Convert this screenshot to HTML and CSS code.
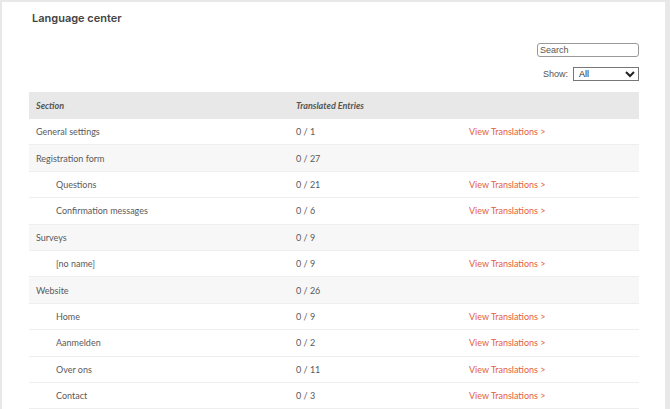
FILE: index.html
```html
<!DOCTYPE html>
<html lang="en">
<head>
    <meta charset="UTF-8">
    <title>Language center</title>
    <link rel="stylesheet" href="styles.css">
</head>
<body>
    <div class="panel">
        <h1>Language center</h1>

        <div class="filters">
            <input type="text" class="search" placeholder="Search">
            <label class="show">Show:
                <select>
                    <option>All</option>
                </select>
            </label>
        </div>

        <table class="entries">
            <thead>
                <tr>
                    <th class="col-section">Section</th>
                    <th class="col-count">Translated Entries</th>
                    <th></th>
                </tr>
            </thead>
            <tbody>
                <tr>
                    <td>General settings</td>
                    <td>0 / 1</td>
                    <td><a href="#">View Translations &gt;</a></td>
                </tr>
                <tr class="group">
                    <td>Registration form</td>
                    <td>0 / 27</td>
                    <td></td>
                </tr>
                <tr>
                    <td class="sub">Questions</td>
                    <td>0 / 21</td>
                    <td><a href="#">View Translations &gt;</a></td>
                </tr>
                <tr>
                    <td class="sub">Confirmation messages</td>
                    <td>0 / 6</td>
                    <td><a href="#">View Translations &gt;</a></td>
                </tr>
                <tr class="group">
                    <td>Surveys</td>
                    <td>0 / 9</td>
                    <td></td>
                </tr>
                <tr>
                    <td class="sub">[no name]</td>
                    <td>0 / 9</td>
                    <td><a href="#">View Translations &gt;</a></td>
                </tr>
                <tr class="group">
                    <td>Website</td>
                    <td>0 / 26</td>
                    <td></td>
                </tr>
                <tr>
                    <td class="sub">Home</td>
                    <td>0 / 9</td>
                    <td><a href="#">View Translations &gt;</a></td>
                </tr>
                <tr>
                    <td class="sub">Aanmelden</td>
                    <td>0 / 2</td>
                    <td><a href="#">View Translations &gt;</a></td>
                </tr>
                <tr>
                    <td class="sub">Over ons</td>
                    <td>0 / 11</td>
                    <td><a href="#">View Translations &gt;</a></td>
                </tr>
                <tr>
                    <td class="sub">Contact</td>
                    <td>0 / 3</td>
                    <td><a href="#">View Translations &gt;</a></td>
                </tr>
            </tbody>
        </table>
    </div>
</body>
</html>
```

FILE: styles.css
```css
body {
    margin: 0;
    background-color: #e8e8e8;
    font-family: 'Lato', 'Noto Sans', sans-serif;
    color: #555;
    height: 100vh;
    overflow: hidden;
}

.panel {
    background-color: #fff;
    margin: 2px 5px 0 2px;
    padding: 8px 26px 0 27px;
    height: 100%;
    box-sizing: border-box;
}

h1 {
    margin: 0 0 0 3px;
    font-family: 'Inter', sans-serif;
    font-size: 11px;
    font-weight: 600;
    color: #444;
    line-height: 16px;
}

.filters {
    display: flex;
    flex-direction: column;
    align-items: flex-end;
    margin-top: 17px;
    gap: 10px;
}

.search {
    width: 102px;
    height: 14px;
    box-sizing: border-box;
    border: 1px solid #999;
    border-radius: 3px;
    padding: 0 2px;
    font-family: 'Liberation Sans', Arial, sans-serif;
    font-size: 9px;
    color: #333;
    outline: none;
}

.search::placeholder {
    color: #555;
}

.show {
    font-family: 'Liberation Sans', Arial, sans-serif;
    font-size: 9px;
    color: #555;
    display: flex;
    align-items: center;
    gap: 5px;
}

.show select {
    width: 66px;
    height: 14px;
    font-family: 'Liberation Sans', Arial, sans-serif;
    font-size: 9px;
    color: #222;
    border: 1px solid #777;
    border-radius: 0;
    padding: 0 1px;
    background-color: #fff;
}

.entries {
    width: 100%;
    margin-top: 11px;
    border-collapse: collapse;
    table-layout: fixed;
    font-size: 9px;
}

.entries th {
    box-sizing: border-box;
    background-color: #e8e8e8;
    height: 27px;
    text-align: left;
    font-style: italic;
    font-weight: 700;
    color: #555;
    padding: 0 7px;
}

.col-section {
    width: 260px;
}

.col-count {
    width: 173px;
}

.entries td {
    height: 25.4px;
    padding: 0 7px;
    border-bottom: 1px solid #eee;
    color: #5a5a5a;
}

.entries tr.group td {
    background-color: #f7f7f7;
}

.entries td.sub {
    padding-left: 27px;
}

.entries a {
    color: #e5603b;
    text-decoration: none;
}
```
